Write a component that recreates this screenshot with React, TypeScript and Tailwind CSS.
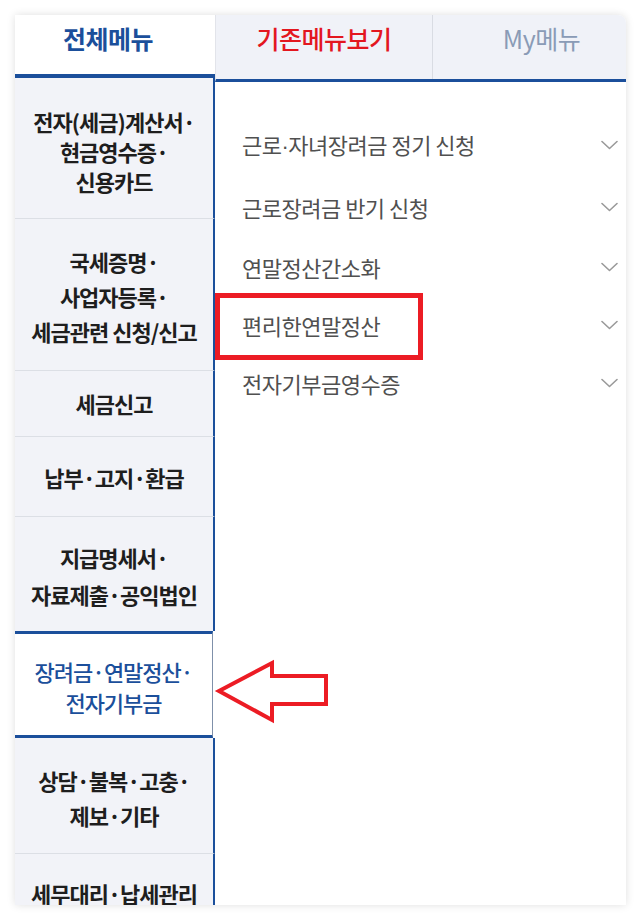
import React from "react";

const FONT = { fontFamily: '"Noto Sans CJK KR", "Noto Sans", sans-serif' };

function Chevron() {
  return (
    <svg width="17" height="10" viewBox="0 0 17 10" fill="none">
      <polyline points="1,1.5 8.5,8.5 16,1.5" stroke="#9a9a9a" strokeWidth="1.6" strokeLinejoin="round" strokeLinecap="round" />
    </svg>
  );
}

type NavItem = { lines: string[]; h: string; lh: string; pt: string; active?: boolean; last?: boolean };

const navItems: NavItem[] = [
  { lines: ["전자(세금)계산서·", "현금영수증·", "신용카드"], h: "h-[141px]", lh: "leading-[30px]", pt: "pt-[6px]" },
  { lines: ["국세증명·", "사업자등록·", "세금관련 신청/신고"], h: "h-[152px]", lh: "leading-[35px]", pt: "pt-[4px]" },
  { lines: ["세금신고"], h: "h-[66px]", lh: "leading-[30px]", pt: "pb-[2px]" },
  { lines: ["납부·고지·환급"], h: "h-[80px]", lh: "leading-[30px]", pt: "pt-0" },
  { lines: ["지급명세서·", "자료제출·공익법인"], h: "h-[114px]", lh: "leading-[37px]", pt: "pt-[4px]" },
  { lines: ["장려금·연말정산·", "전자기부금"], h: "h-[107px]", lh: "leading-[31px]", pt: "pt-[4px]", active: true },
  { lines: ["상담·불복·고충·", "제보·기타"], h: "h-[116px]", lh: "leading-[35px]", pt: "pt-[4px]" },
  { lines: ["세무대리·납세관리"], h: "h-[80px]", lh: "leading-[30px]", pt: "pb-[2px]", last: true },
];

const dot = <span style={{ fontFamily: '"Liberation Sans", sans-serif' }}>·</span>;

const rightItems: { t: React.ReactNode; h: string }[] = [
  {
    t: (
      <>
        근로{dot}자녀장려금 정기 신청
      </>
    ),
    h: "h-[62px]",
  },
  { t: "근로장려금 반기 신청", h: "h-[62px]" },
  { t: "연말정산간소화", h: "h-[58px]" },
  { t: "편리한연말정산", h: "h-[58px]" },
  { t: "전자기부금영수증", h: "h-[58px]" },
];

export default function App() {
  return (
    <div className="relative w-[640px] h-[920px] bg-white overflow-hidden" style={FONT}>
      <div className="absolute left-[15px] top-[15px] w-[611px] h-[890px] bg-white rounded-tr-[8px] shadow-[0_0_8px_rgba(0,0,0,0.13)] overflow-hidden flex">
        {/* Left column */}
        <div className="w-[200px] flex flex-col shrink-0">
          <div className="h-[59px] shrink-0 flex justify-center pt-[8px] pr-[14px] bg-white">
            <span className="text-[25px] leading-[30px] font-bold text-[#1b4f9b] tracking-[-0.5px]">전체메뉴</span>
          </div>
          <div className="flex flex-col shrink-0 border-t-[4px] border-[#1b4f9b] bg-white">
            {navItems.map((it, i) =>
              it.active ? (
                <div
                  key={i}
                  className={`${it.h} ${it.pt} flex flex-col items-center justify-center bg-white border-t-[3px] border-b-[3px] border-[#1b4f9b] mr-[2px] border-r border-r-[#7f90aa] text-[22px] font-medium text-[#1b4f9b] tracking-[-1px] text-center shrink-0 whitespace-nowrap`}
                >
                  {it.lines.map((l, j) => (
                    <div key={j} className={it.lh}>
                      {l}
                    </div>
                  ))}
                </div>
              ) : (
                <div
                  key={i}
                  className={`${it.h} ${it.pt} flex flex-col items-center justify-center bg-[#f2f3f8] border-r-[2px] border-r-[#1b4f9b] ${
                    navItems[i + 1]?.active || it.last ? "" : "border-b border-b-[#dcdfe5]"
                  } text-[22px] font-bold text-[#1e1e1e] tracking-[-1px] text-center shrink-0 whitespace-nowrap`}
                >
                  {it.lines.map((l, j) => (
                    <div key={j} className={it.lh}>
                      {l}
                    </div>
                  ))}
                </div>
              )
            )}
          </div>
        </div>
        {/* Right column */}
        <div className="flex-1 flex flex-col">
          <div className="h-[67px] shrink-0 flex bg-[#f0f2f8] border-b-[3px] border-[#1b4f9b] border-l border-l-[#e2e4ea]">
            <div className="w-[217px] flex justify-center pt-[8px] border-r border-[#d9dce3]">
              <span className="text-[25px] leading-[30px] font-medium text-[#e3171f] tracking-[-0.5px]">기존메뉴보기</span>
            </div>
            <div className="flex-1 flex justify-center pt-[8px] pl-[24px]">
              <span className="text-[25px] leading-[30px] text-[#8a9bb6] tracking-[-0.5px]">My메뉴</span>
            </div>
          </div>
          <div className="flex-1 flex flex-col pt-[32px] pl-[27px] pr-[8px] bg-white">
            {rightItems.map((it, i) => (
              <div key={i} className={`${it.h} flex items-center justify-between`}>
                <span className="text-[22px] text-[#505050] tracking-[-0.5px]">{it.t}</span>
                <Chevron />
              </div>
            ))}
          </div>
        </div>
      </div>

      {/* Annotation: red box */}
      <div className="absolute left-[215px] top-[293px] w-[208px] h-[67px] border-[5px] border-[#ec1c24]" />

      {/* Annotation: red arrow */}
      <svg className="absolute left-[210px] top-[655px]" width="125" height="75" viewBox="210 655 125 75">
        <polygon
          points="219,691 272,663 272,676 326,676 326,704 272,704 272,720"
          fill="white"
          stroke="#ec1c24"
          strokeWidth="4"
          strokeLinejoin="miter"
        />
      </svg>
    </div>
  );
}
